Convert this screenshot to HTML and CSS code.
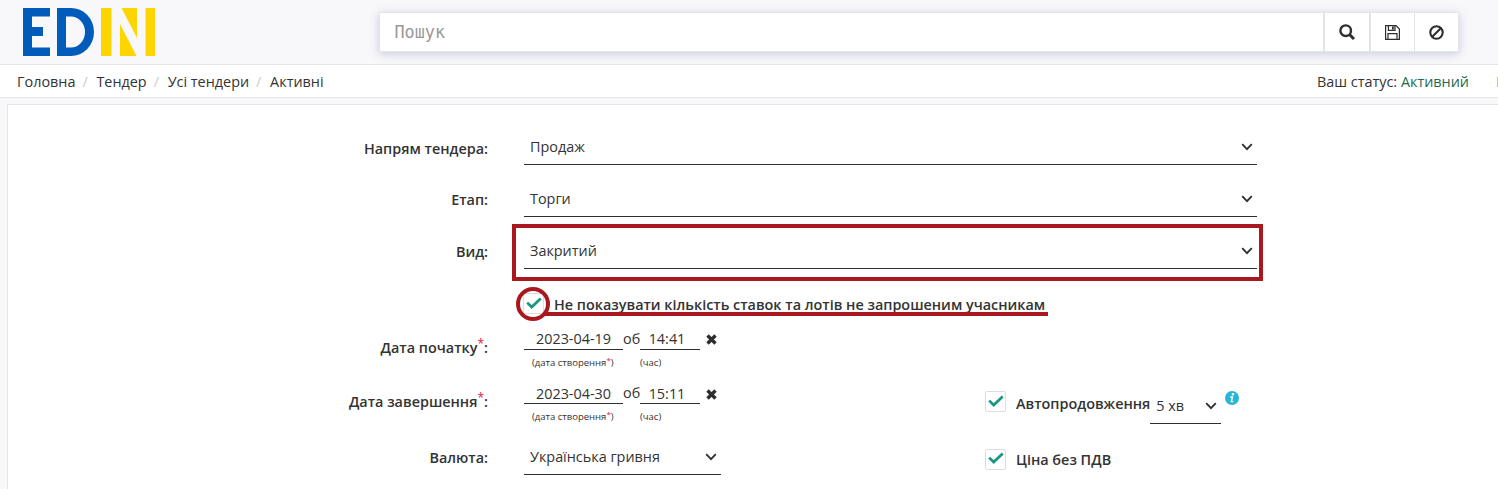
FILE: index.html
```html
<!DOCTYPE html>
<html lang="uk">
<head>
<meta charset="utf-8">
<title>EDIN</title>
<link rel="stylesheet" href="styles.css">
</head>
<body>
<svg class="defs" aria-hidden="true">
  <symbol id="chevron" viewBox="0 0 12 8"><path d="M1.2 1.2 6 6.2 10.8 1.2" fill="none" stroke="#2e2e2e" stroke-width="1.8"/></symbol>
  <symbol id="check" viewBox="0 0 16 12"><path d="M1.2 5.6 5.7 10 14.7 1.4" fill="none" stroke="#179780" stroke-width="2.7"/></symbol>
  <symbol id="cross" viewBox="0 0 11 11"><path d="M1.5 1.5 9.5 9.5M9.5 1.5 1.5 9.5" fill="none" stroke="#2e2e2e" stroke-width="3.4"/></symbol>
</svg>
<header class="topbar">
  <svg class="logo" viewBox="0 0 132 48" role="img" aria-label="EDIN">
    <g fill="#005bbb"><rect width="9" height="48"/><rect width="27" height="8.5"/><rect y="19" width="20" height="9"/><rect y="39.5" width="27" height="8.5"/>
    <path fill-rule="evenodd" d="M34 0H48A23 24 0 0 1 48 48H34ZM43 8.5V39.5H48A14 15.500 0 0 0 48 8.500Z"/></g>
    <g fill="#ffd500"><rect x="78" width="10.500" height="48"/><path d="M98.500 0H114V30ZM97 16 113.500 48H97Z"/><rect x="122.500" width="9.500" height="48"/></g>
  </svg>
  <div class="search">
    <div class="search-input">Пошук</div>
    <div class="tool"><svg width="16" height="16" viewBox="0 0 16 16" fill="none" stroke="#2e2e2e"><circle cx="6.700" cy="6.700" r="5.300" stroke-width="2.400"/><path d="M10.300 10.300 15 15" stroke-width="3"/></svg></div>
    <div class="tool save"><svg width="15" height="15" viewBox="0 0 15 15" fill="none" stroke="#2e2e2e" stroke-width="1.200"><path d="M.6.600H11L14.400 4V14.400H.6ZM3.400.600V5.400H10V.600M3 14.400V8.600H12V14.400"/><rect x="7" y="1.500" width="1.800" height="3" fill="#2e2e2e" stroke="none"/></svg></div>
    <div class="tool stop"><svg width="15" height="15" viewBox="0 0 15 15" fill="none" stroke="#2e2e2e" stroke-width="2.100"><circle cx="7.500" cy="7.500" r="6.200"/><path d="M3.200 11.800 11.800 3.200"/></svg></div>
  </div>
</header>
<nav class="crumbs">
  <a>Головна</a><i>/</i><a>Тендер</a><i>/</i><a>Усі тендери</a><i>/</i><a>Активні</a>
  <div class="status">Ваш статус: <span>Активний</span></div>
  <div class="edge"></div>
</nav>
<main class="panel">
  <div class="row"><label class="label">Напрям тендера:</label><div class="select wide">Продаж<svg class="chev"><use href="#chevron"/></svg></div></div>
  <div class="row"><label class="label up">Етап:</label><div class="select wide">Торги<svg class="chev"><use href="#chevron"/></svg></div></div>
  <div class="row"><label class="label up">Вид:</label><div class="select wide">Закритий<svg class="chev"><use href="#chevron"/></svg><span class="frame"></span></div></div>
  <div class="row option"><div class="box"><svg class="tick"><use href="#check"/></svg><span class="ring"></span></div><span class="caption">Не показувати кількість ставок та лотів не запрошеним учасникам<span class="mark"></span></span></div>
  <div class="row date-row">
    <label class="label">Дата початку<sup>*</sup>:</label>
    <div class="dates">
      <div><div class="field date">2023-04-19</div><div class="note first">(дата створення<sup>*</sup>)</div></div><span class="at">об</span>
      <div><div class="field time">14:41</div><div class="note">(час)</div></div><svg class="clear"><use href="#cross"/></svg>
    </div>
  </div>
  <div class="row date-row end">
    <label class="label">Дата завершення<sup>*</sup>:</label>
    <div class="dates">
      <div><div class="field date">2023-04-30</div><div class="note first">(дата створення<sup>*</sup>)</div></div><span class="at">об</span>
      <div><div class="field time">15:11</div><div class="note">(час)</div></div><svg class="clear"><use href="#cross"/></svg>
    </div>
    <div class="side auto"><div class="box"><svg class="tick"><use href="#check"/></svg></div><span class="caption">Автопродовження</span><div class="select small">5 хв<svg class="chev"><use href="#chevron"/></svg></div>
      <svg class="info" viewBox="0 0 14 14"><circle cx="7" cy="7" r="7" fill="#27b6d8"/><circle cx="8" cy="3.300" r="1.200" fill="#fff"/><path d="M5.200 6H7.500L6.400 10.600H8.400" fill="none" stroke="#fff" stroke-width="1.400"/></svg>
    </div>
  </div>
  <div class="row last">
    <label class="label up">Валюта:</label><div class="select currency">Українська гривня<svg class="chev"><use href="#chevron"/></svg></div>
    <div class="side"><div class="box"><svg class="tick"><use href="#check"/></svg></div><span class="caption">Ціна без ПДВ</span></div>
  </div>
</main>
</body>
</html>
```
FILE: styles.css
```css
* { box-sizing: border-box; }
body { margin: 0; height: 489px; overflow: hidden; background: #f8f8fb; color: #333; font: 14.4px/20px "Open Sans", "Noto Sans", sans-serif; }
.defs { display: none; }
svg { display: block; flex: none; }
.topbar { display: flex; height: 65px; padding: 8px 0 0 23px; border-bottom: 1px solid #e4e6ea; }
.logo { width: 132px; height: 48px; }
.search { display: flex; width: 1080px; height: 40px; margin: 4px 0 0 224px; background: #fff; border: 1px solid #e4e5e8; box-shadow: 0 2px 9px rgba(80, 85, 135, .28); }
.search-input { flex: 1; padding: 0 14.5px; color: #999; font: 16.8px/38px "DejaVu Sans Mono", monospace; }
.tool { display: flex; width: 46px; align-items: center; justify-content: center; border-left: 2px solid #e4e4e6; }
.tool.stop { width: 44px; border-left-width: 1px; }
.tool.save { width: 45px; }
.crumbs { display: flex; height: 33px; padding: 1px 0 0 17px; align-items: center; background: #fff; border-bottom: 1px solid #e4e6ea; }
.crumbs i { width: 21px; padding-left: 7px; color: #ccc; font-style: normal; }
.status { margin-left: auto; }
.status span { color: #226b50; }
.edge { width: 1px; height: 10px; margin-left: 28px; background: #f5b57c; }
.panel { height: 400px; margin: 6px 0 0 7px; padding-top: 8px; background: #fff; border: 1px solid #e4e6ea; border-right: 0; }
.row { display: flex; height: 52px; align-items: flex-end; }
.label { width: 480px; margin-right: 36px; text-align: right; font-weight: 600; padding-bottom: 6px; }
.label.up { padding-bottom: 7px; }
.label sup, .note sup { color: #e8123c; font-weight: 400; font-size: 12px; line-height: 0; vertical-align: 5px; }
.note sup { font-size: 8px; vertical-align: 3px; }
.select { position: relative; display: flex; height: 36px; padding: 0 4px 0 6px; align-items: center; justify-content: space-between; border-bottom: 1px solid #2e2e2e; }
.wide { width: 733px; }
.chev { width: 12px; height: 8px; }
.frame { position: absolute; left: -12px; top: -9px; width: 751px; height: 57px; border: 4px solid #a9181f; }
.option { padding-left: 515px; align-items: center; height: 52px; }
.box { position: relative; display: flex; flex: none; width: 21px; height: 21px; align-items: center; justify-content: center; border: 1px solid #ddd; border-radius: 2px; }
.option .box { margin-top: 17px; }
.tick { width: 16px; height: 12px; margin-top: -2px; }
.ring { position: absolute; left: -8px; top: -7px; width: 34px; height: 34px; border: 4px solid #a9181f; border-radius: 50%; }
.caption { position: relative; margin-left: 10px; font-weight: 600; white-space: nowrap; }
.option .caption { margin-top: 20px; }
.mark { position: absolute; left: -9px; top: 17px; width: 503px; height: 4px; background: #a9181f; }
.date-row { height: 54px; align-items: flex-start; }
.date-row .label { padding: 17px 0 0; margin-right: 36px; }
.dates { display: flex; width: 200px; padding-top: 8px; }
.field { height: 21px; text-align: center; border-bottom: 1px solid #2e2e2e; }
.end .field { line-height: 21px; }
.date { width: 99px; }
.time { width: 60px; padding-right: 6px; }
.at { width: 17px; text-align: center; }
.note { margin-top: 4px; font-size: 9.5px; line-height: 18px; }
.first { padding-left: 8px; }
.clear { width: 11px; height: 11px; margin: 5px 0 0 6px; }
.end .clear { margin-top: 6px; }
.side { display: flex; align-items: center; }
.auto { height: 40px; margin: 9px 0 0 261px; align-items: flex-start; }
.auto .box { margin-top: 7px; }
.auto .caption { margin-top: 10px; }
.small { width: 71px; height: 36px; margin-top: 4px; }
.info { width: 14px; height: 14px; margin: 7px 0 0 3.5px; }
.last { height: 46px; }
.currency { width: 197px; }
.last .side { margin: 0 0 5px 264px; }
.last .box { margin-top: -2px; }
```
